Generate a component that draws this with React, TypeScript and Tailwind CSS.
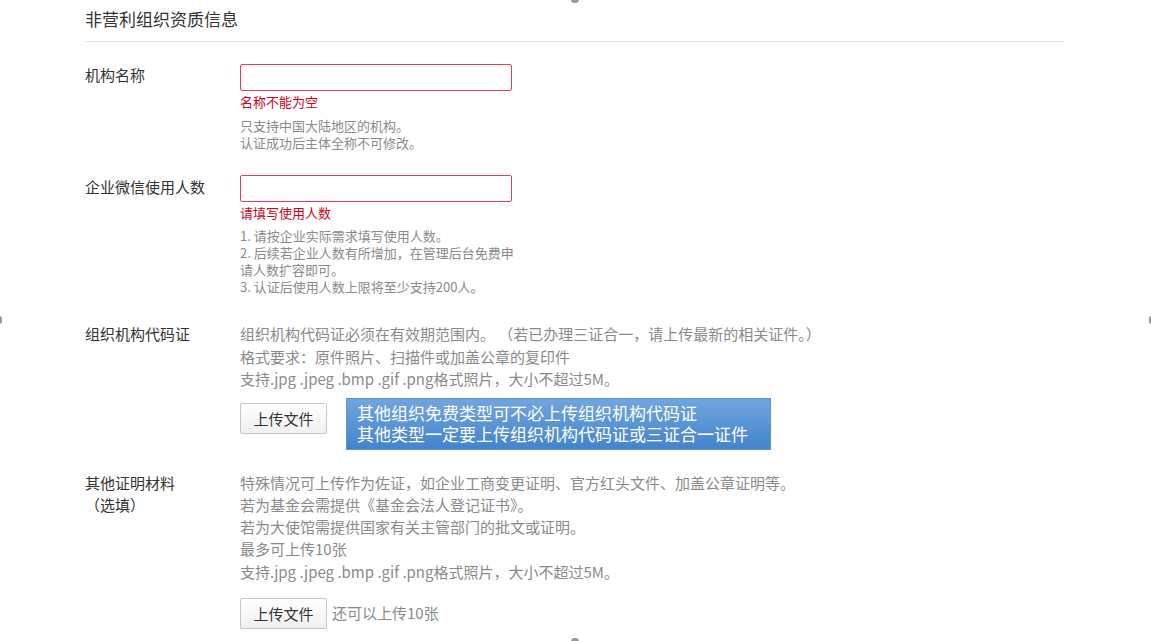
import React from "react";

const font = { fontFamily: '"Noto Sans CJK SC", "Noto Sans", sans-serif' };

function UploadButton() {
    return (
        <button className="h-[31px] w-[87px] rounded-[2px] border border-[#c6c6c6] bg-gradient-to-b from-white to-[#f0f0f0] text-[15px] leading-none text-[#333]">
            上传文件
        </button>
    );
}

function Handle({ className }: { className: string }) {
    return <span className={`absolute rounded-full bg-[#9a9a9a] ${className}`} />;
}

export default function App() {
    return (
        <div className="relative h-[641px] w-[1151px] overflow-hidden bg-white" style={font}>
            {/* selection handles on the picture's edges */}
            <Handle className="left-[571px] top-[-4px] h-[7px] w-[8px]" />
            <Handle className="left-[571px] top-[638px] h-[7px] w-[8px]" />
            <Handle className="left-[-3px] top-[316px] h-[8px] w-[5px]" />
            <Handle className="left-[1149px] top-[316px] h-[8px] w-[5px]" />

            <div className="ml-[85px] w-[979px]">
                {/* title */}
                <div className="border-b border-[#e4e4e4] pt-[7px] pb-[10px]">
                    <h2 className="text-[17px] leading-[24px] text-[#333]">非营利组织资质信息</h2>
                </div>

                {/* 机构名称 */}
                <div className="mt-[22px] flex">
                    <div className="w-[155px] shrink-0 text-[15px] leading-[22px] text-[#333]">机构名称</div>
                    <div>
                        <input className="block h-[27px] w-[272px] rounded-[2px] border border-[#e0405a] outline-none" />
                        <p className="mt-[3px] text-[13px] leading-[16px] text-[#d0021b]">名称不能为空</p>
                        <div className="mt-[8px] text-[13px] leading-[16.5px] text-[#8a8a8a]">
                            <div>只支持中国大陆地区的机构。</div>
                            <div>认证成功后主体全称不可修改。</div>
                        </div>
                    </div>
                </div>

                {/* 企业微信使用人数 */}
                <div className="mt-[24px] flex">
                    <div className="w-[155px] shrink-0 pt-[1px] text-[15px] leading-[22px] text-[#333]">企业微信使用人数</div>
                    <div>
                        <input className="block h-[27px] w-[272px] rounded-[2px] border border-[#e0405a] outline-none" />
                        <p className="mt-[3px] text-[13px] leading-[16px] text-[#d0021b]">请填写使用人数</p>
                        <div className="mt-[6px] whitespace-nowrap text-[13px] leading-[17px] text-[#8a8a8a]">
                            <div>1. 请按企业实际需求填写使用人数。</div>
                            <div>2. 后续若企业人数有所增加，在管理后台免费申</div>
                            <div>请人数扩容即可。</div>
                            <div>3. 认证后使用人数上限将至少支持200人。</div>
                        </div>
                    </div>
                </div>

                {/* 组织机构代码证 */}
                <div className="mt-[28px] flex">
                    <div className="w-[155px] shrink-0 text-[15px] leading-[22.5px] text-[#333]">组织机构代码证</div>
                    <div>
                        <div className="whitespace-nowrap text-[15px] leading-[22.5px] text-[#8a8a8a]">
                            <div>组织机构代码证必须在有效期范围内。 （若已办理三证合一，请上传最新的相关证件。）</div>
                            <div>格式要求：原件照片、扫描件或加盖公章的复印件</div>
                            <div>支持.jpg .jpeg .bmp .gif .png格式照片，大小不超过5M。</div>
                        </div>
                        <div className="relative mt-[12px] h-[31px]">
                            <UploadButton />
                            {/* tooltip */}
                            <div className="absolute left-[106px] top-[-5px] h-[52px] w-[425px] border border-[#5b96d4] bg-gradient-to-b from-[#71a5de] to-[#4284cb] px-[10px] pt-[3px] text-[17px] leading-[21px] text-white">
                                <div>其他组织免费类型可不必上传组织机构代码证</div>
                                <div>其他类型一定要上传组织机构代码证或三证合一证件</div>
                            </div>
                        </div>
                    </div>
                </div>

                {/* 其他证明材料 */}
                <div className="mt-[38px] flex">
                    <div className="w-[155px] shrink-0 text-[15px] leading-[22px] text-[#333]">
                        <div>其他证明材料</div>
                        <div>（选填）</div>
                    </div>
                    <div>
                        <div className="whitespace-nowrap text-[15px] leading-[22.25px] text-[#8a8a8a]">
                            <div>特殊情况可上传作为佐证，如企业工商变更证明、官方红头文件、加盖公章证明等。</div>
                            <div>若为基金会需提供《基金会法人登记证书》。</div>
                            <div>若为大使馆需提供国家有关主管部门的批文或证明。</div>
                            <div>最多可上传10张</div>
                            <div>支持.jpg .jpeg .bmp .gif .png格式照片，大小不超过5M。</div>
                        </div>
                        <div className="mt-[15px] flex items-center gap-[5px]">
                            <UploadButton />
                            <span className="text-[15px] text-[#8a8a8a]">还可以上传10张</span>
                        </div>
                    </div>
                </div>
            </div>
        </div>
    );
}
